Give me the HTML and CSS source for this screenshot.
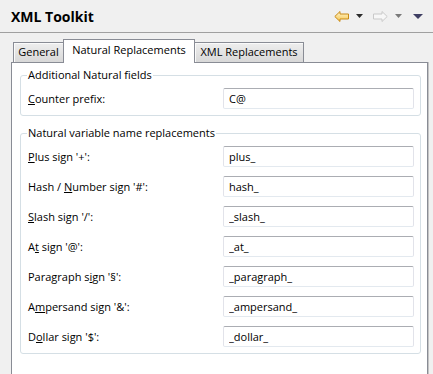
FILE: index.html
```html
<!DOCTYPE html>
<html lang="en">
<head>
	<meta charset="UTF-8">
	<title>XML Toolkit</title>
	<link rel="stylesheet" href="styles.css">
</head>
<body>
	<div class="view">
		<div class="titlebar">
			<h1 class="title">XML Toolkit</h1>
			<div class="tools">
				<svg class="arrow" width="15" height="11" viewBox="0 0 15 11">
					<defs>
						<linearGradient id="gold" x1="0" y1="0" x2="0" y2="1">
							<stop offset="0" stop-color="#fff6d2"/>
							<stop offset="1" stop-color="#f6c54c"/>
						</linearGradient>
					</defs>
					<polygon points="0.8,5.5 6,0.5 6,3 14.5,3 14.5,8 6,8 6,10.5" fill="url(#gold)" stroke="#c98a16" stroke-linejoin="round"/>
				</svg>
				<svg class="drop" width="7" height="4" viewBox="0 0 7 4"><polygon points="0,0 7,0 3.5,4" fill="#2b2b2b"/></svg>
				<svg class="arrow fwd" width="15" height="11" viewBox="0 0 15 11">
					<polygon points="14.2,5.5 9,0.5 9,3 0.5,3 0.5,8 9,8 9,10.5" fill="#f7f7f7" stroke="#c9c9c9" stroke-linejoin="round"/>
				</svg>
				<svg class="drop" width="7" height="4" viewBox="0 0 7 4"><polygon points="0,0 7,0 3.5,4" fill="#7a7a7a"/></svg>
				<svg class="drop menu" width="10" height="5" viewBox="0 0 10 5"><polygon points="0,0 10,0 5,5" fill="#3f3f63"/></svg>
			</div>
		</div>

		<div class="tabs">
			<div class="tab first">General</div>
			<div class="tab active">Natural Replacements</div>
			<div class="tab last">XML Replacements</div>
		</div>

		<div class="panel">
			<fieldset class="group">
				<legend>Additional Natural fields</legend>
				<div class="rows">
					<label class="label"><u>C</u>ounter prefix:</label>
					<input class="input" type="text" value="C@">
				</div>
			</fieldset>

			<fieldset class="group">
				<legend>Natural variable name replacements</legend>
				<div class="rows">
					<label class="label"><u>P</u>lus sign '+':</label>
					<input class="input" type="text" value="plus_">
					<label class="label">Hash / <u>N</u>umber sign '#':</label>
					<input class="input" type="text" value="hash_">
					<label class="label"><u>S</u>lash sign '/':</label>
					<input class="input" type="text" value="_slash_">
					<label class="label">A<u>t</u> sign '@':</label>
					<input class="input" type="text" value="_at_">
					<label class="label">Paragraph s<u>i</u>gn '§':</label>
					<input class="input" type="text" value="_paragraph_">
					<label class="label">A<u>m</u>persand sign '&amp;':</label>
					<input class="input" type="text" value="_ampersand_">
					<label class="label">D<u>o</u>llar sign '$':</label>
					<input class="input" type="text" value="_dollar_">
				</div>
			</fieldset>
		</div>
	</div>
</body>
</html>
```

FILE: styles.css
```css
body {
	margin: 0;
	background: #f0f0f0;
	font-family: "Open Sans", "Noto Sans", sans-serif;
	font-size: 11px;
	color: #000;
}

/* view title */
.titlebar {
	height: 32px;
	border-bottom: 1px solid #a0a0a0;
	display: flex; align-items: center;
	padding: 0 10px 0 11px;
}
.title {
	margin: 0;
	font-size: 14px; font-weight: bold;
	color: #000;
}
.tools {
	margin-left: auto;
	display: flex; align-items: center;
}
.tools svg { display: block; }
.tools .drop { margin-left: 7px; }
.tools .fwd { margin-left: 10px; }
.tools .menu { margin-left: 11px; }

/* tab folder */
.tabs {
	display: flex; align-items: flex-end;
	height: 23px;
	margin: 6px 0 0 13px;
}
.tab {
	box-sizing: border-box;
	height: 20px; line-height: 18px;
	text-align: center;
	border: 1px solid #898c95; border-bottom: none;
	background: linear-gradient(#eeeeee, #d8d8d8);
	box-shadow: inset 1px 1px 0 #fafafa;
}
.tab.first { width: 50px; border-right: none; }
.tab.last { width: 109px; border-left: none; }
.tab.active {
	width: 132px; height: 24px; line-height: 19px;
	margin-bottom: -1px;
	background: #fff; box-shadow: none;
	position: relative; z-index: 1;
}

/* panel runs on past the bottom of the view */
.panel {
	box-sizing: border-box;
	width: 417px; margin-left: 11px;
	border: 1px solid #898c95; border-bottom: none;
	box-shadow: 1px 0 0 #c4c4c4;
	background: #fff;
	padding: 5px 6px 20px 8px;
}

/* group boxes */
.group {
	margin: 0;
	border: 1px solid #d5dfe5; border-radius: 3px;
	padding: 6px 6px 6px 7px;
	min-inline-size: 0;
}
.group + .group { margin-top: 10px; }
.group legend {
	padding: 0 1px; margin-left: -1px;
	line-height: 14px;
}
.rows {
	display: grid;
	grid-template-columns: 1fr 191px;
	row-gap: 9px;
	align-items: center;
}
.label u { text-underline-offset: 1px; }
.input {
	box-sizing: border-box;
	height: 21px; width: 191px; margin: 0;
	border: 1px solid; border-color: #abadb3 #e2e3ea #e3e9ef #e2e3ea;
	border-radius: 2px;
	padding: 0 5px;
	font-family: inherit; font-size: 11px; color: #000;
}
```
